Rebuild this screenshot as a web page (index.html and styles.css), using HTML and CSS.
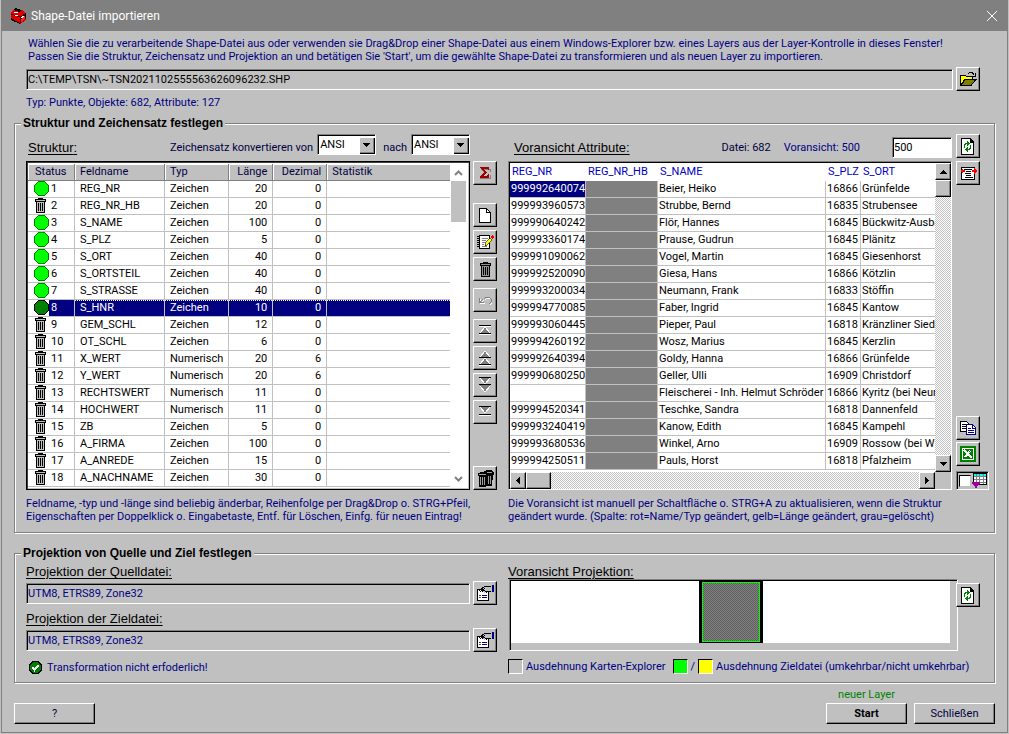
FILE: index.html
```html
<!DOCTYPE html>
<html lang="de">
<head>
<meta charset="utf-8">
<title>Shape-Datei importieren</title>
<link rel="stylesheet" href="styles.css">
</head>
<body>
<svg class="defs" aria-hidden="true">
  <symbol id="bin" viewBox="0 0 13 15"><path d="M4 0h5v1h3v3h-1v11H2V4H1V1h3z" fill="#000"/><path d="M2 2h9v1H2zM3 4h7v10H3z" fill="#909090"/><path d="M4 5h1v8H4zM6 5h1v8H6zM8 5h1v8H8z" fill="#000"/></symbol>
  <symbol id="bin-status" viewBox="0 0 13 15"><path d="M4 0h5v1h3v3h-1v11H2V4H1V1h3z" fill="#000"/><path d="M2 2h9v1H2zM3 4h7v10H3z" fill="#c0c0c0"/><path d="M4 5h1v8H4zM6 5h1v8H6zM8 5h1v8H8z" fill="#000"/></symbol>
  <symbol id="ok" viewBox="0 0 15 15"><path d="M4.500.5h6l4 4v6l-4 4h-6l-4-4v-6z" fill="#0f0" stroke="#008000"/></symbol>
  <symbol id="ok-selected" viewBox="0 0 15 15"><path d="M4.500.5h6l4 4v6l-4 4h-6l-4-4v-6z" fill="#008000" stroke="#000"/></symbol>
  <symbol id="refresh" viewBox="0 0 14 17"><path d="M0 0h10v1h1v1h1v1h1v14H0z" fill="#000"/><path d="M1 1h8v4h3v11H1z" fill="#fff"/><path d="M3 10V6h1V5h2V3h1v1h1v1h1v1H8v1H7v1H6V6H5v1H4v3zM10 7v4H9v1H7v2H6v-1H5v-1H4v-1h1v-1h1V9h1v2h1v-1h1V7z" fill="#008000"/></symbol>
  <symbol id="props" viewBox="0 0 17 16"><path d="M.5 4.500h11v11H.5z" fill="#fff" stroke="#000"/><path d="M2 10h2v1H2z" fill="#c00"/><path d="M2 12h2v1H2z" fill="#080"/><path d="M5 10h5v1H5zM5 12h5v1H5z" fill="#000080"/><path d="M3 5l5-4h6v5H9L8 8z" fill="#c0c0c0"/><path d="M2 6l6-5h6M3 7l5-4M9 6h5M5 7l2-2 3 3" fill="none" stroke="#000"/><path d="M15 0h2v7h-2z" fill="#000080"/></symbol>
</svg>
<main class="window">
  <header class="titlebar">
    <svg class="app-icon" width="16" height="16" viewBox="0 0 16 16"><path d="M1 5L4 1l8 1 4 4v6l-6 4-9-5z" fill="#d00"/><path d="M3 2l3-2 5 2-2 2zM10 9l5-3v5l-5 4zM1 10l9 5v1L1 12zM15 5h1v6h-1z" fill="#000"/><path d="M10 9v6M1 6l9 3 5-3" fill="none" stroke="#600"/><path d="M4 4l4 1M5 7l3 1M11 10l3-2" stroke="#fff"/><path d="M11 11l4-3v3l-4 3z" fill="#f22"/></svg>
    <h1>Shape-Datei importieren</h1>
    <button class="close" type="button" aria-label="Fenster schließen"><svg width="10" height="10" viewBox="0 0 10 10"><path d="M0 0l10 10M10 0L0 10" stroke="#fff" fill="none"/></svg></button>
  </header>
  <div class="content">
    <p class="intro">Wählen Sie die zu verarbeitende Shape-Datei aus oder verwenden sie Drag&amp;Drop einer Shape-Datei aus einem Windows-Explorer bzw. eines Layers aus der Layer-Kontrolle in dieses Fenster!<br>Passen Sie die Struktur, Zeichensatz und Projektion an und betätigen Sie 'Start', um die gewählte Shape-Datei zu transformieren und als neuen Layer zu importieren.</p>
    <div class="path-row">
      <input class="field path" type="text" aria-label="Shape-Datei" value="C:\TEMP\TSN\~TSN2021102555563626096232.SHP" readonly>
      <button class="tool" type="button" aria-label="Datei öffnen"><svg width="18" height="15" viewBox="0 0 18 15"><path d="M1 4l1-1h4l1 1h6v3H6l-4 6H1z" fill="#ff0" stroke="#000"/><path d="M2 13.500L6 7.500h11l-5 6z" fill="#808000" stroke="#000"/><path d="M9 2l2-2h2l2 3M16 1v3h-3" fill="none" stroke="#000"/></svg></button>
    </div>
    <p class="file-info">Typ: Punkte, Objekte: 682, Attribute: 127</p>

    <fieldset class="group structure">
      <legend>Struktur und Zeichensatz festlegen</legend>
      <div class="columns">
        <div class="bar">
          <h2 class="heading">Struktur:</h2>
          <label class="push" for="from">Zeichensatz konvertieren von</label>
          <span class="combo"><select id="from"><option>ANSI</option></select><svg width="15" height="16" viewBox="0 0 15 16" aria-hidden="true"><path d="M4 6h7v1h-1v1H9v1H8v1H7V9H6V8H5V7H4z"/></svg></span>
          <label class="to" for="to">nach</label>
          <span class="combo"><select id="to"><option>ANSI</option></select><svg width="15" height="16" viewBox="0 0 15 16" aria-hidden="true"><path d="M4 6h7v1h-1v1H9v1H8v1H7V9H6V8H5V7H4z"/></svg></span>
        </div>
        <div></div>
        <div class="bar">
          <h2 class="heading inset">Voransicht Attribute:</h2>
          <span class="push dark">Datei: 682</span>
          <label class="count-label" for="count">Voransicht: 500</label>
          <input class="field count" id="count" type="text" value="500">
        </div>
        <div class="bar-tool"><button class="tool" type="button" aria-label="Voransicht aktualisieren"><svg width="14" height="17"><use href="#refresh"/></svg></button></div>

        <div class="list">
          <table class="fields">
            <colgroup><col class="c-status"><col class="c-name"><col class="c-type"><col class="c-len"><col class="c-dec"><col></colgroup>
            <thead><tr><th>Status</th><th>Feldname</th><th>Typ</th><th>Länge</th><th>Dezimal</th><th>Statistik</th></tr></thead>
            <tbody>
              <tr><td><svg class="on"><use href="#ok"/></svg><span>1</span></td><td>REG_NR</td><td>Zeichen</td><td>20</td><td>0</td><td></td></tr>
              <tr><td><svg class="off"><use href="#bin-status"/></svg><span>2</span></td><td>REG_NR_HB</td><td>Zeichen</td><td>20</td><td>0</td><td></td></tr>
              <tr><td><svg class="on"><use href="#ok"/></svg><span>3</span></td><td>S_NAME</td><td>Zeichen</td><td>100</td><td>0</td><td></td></tr>
              <tr><td><svg class="on"><use href="#ok"/></svg><span>4</span></td><td>S_PLZ</td><td>Zeichen</td><td>5</td><td>0</td><td></td></tr>
              <tr><td><svg class="on"><use href="#ok"/></svg><span>5</span></td><td>S_ORT</td><td>Zeichen</td><td>40</td><td>0</td><td></td></tr>
              <tr><td><svg class="on"><use href="#ok"/></svg><span>6</span></td><td>S_ORTSTEIL</td><td>Zeichen</td><td>40</td><td>0</td><td></td></tr>
              <tr><td><svg class="on"><use href="#ok"/></svg><span>7</span></td><td>S_STRASSE</td><td>Zeichen</td><td>40</td><td>0</td><td></td></tr>
              <tr class="selected"><td><svg class="on"><use href="#ok-selected"/></svg><span>8</span></td><td>S_HNR</td><td>Zeichen</td><td>10</td><td>0</td><td></td></tr>
              <tr><td><svg class="off"><use href="#bin-status"/></svg><span>9</span></td><td>GEM_SCHL</td><td>Zeichen</td><td>12</td><td>0</td><td></td></tr>
              <tr><td><svg class="off"><use href="#bin-status"/></svg><span>10</span></td><td>OT_SCHL</td><td>Zeichen</td><td>6</td><td>0</td><td></td></tr>
              <tr><td><svg class="off"><use href="#bin-status"/></svg><span>11</span></td><td>X_WERT</td><td>Numerisch</td><td>20</td><td>6</td><td></td></tr>
              <tr><td><svg class="off"><use href="#bin-status"/></svg><span>12</span></td><td>Y_WERT</td><td>Numerisch</td><td>20</td><td>6</td><td></td></tr>
              <tr><td><svg class="off"><use href="#bin-status"/></svg><span>13</span></td><td>RECHTSWERT</td><td>Numerisch</td><td>11</td><td>0</td><td></td></tr>
              <tr><td><svg class="off"><use href="#bin-status"/></svg><span>14</span></td><td>HOCHWERT</td><td>Numerisch</td><td>11</td><td>0</td><td></td></tr>
              <tr><td><svg class="off"><use href="#bin-status"/></svg><span>15</span></td><td>ZB</td><td>Zeichen</td><td>5</td><td>0</td><td></td></tr>
              <tr><td><svg class="off"><use href="#bin-status"/></svg><span>16</span></td><td>A_FIRMA</td><td>Zeichen</td><td>100</td><td>0</td><td></td></tr>
              <tr><td><svg class="off"><use href="#bin-status"/></svg><span>17</span></td><td>A_ANREDE</td><td>Zeichen</td><td>15</td><td>0</td><td></td></tr>
              <tr><td><svg class="off"><use href="#bin-status"/></svg><span>18</span></td><td>A_NACHNAME</td><td>Zeichen</td><td>30</td><td>0</td><td></td></tr>
            </tbody>
          </table>
          <div class="flat-scroll">
            <svg width="9" height="6" viewBox="0 0 9 6"><path d="M1 5l3.500-3.500L8 5" fill="none" stroke="#808080" stroke-width="2"/></svg>
            <span class="flat-thumb"></span>
            <svg width="9" height="6" viewBox="0 0 9 6"><path d="M1 1l3.500 3.500L8 1" fill="none" stroke="#808080" stroke-width="2"/></svg>
          </div>
        </div>

        <div class="tools">
          <button class="tool" type="button" aria-label="Statistik"><svg width="12" height="12" viewBox="0 0 12 12"><path d="M2 2h9v3M2 2l4 4-4 5h9V8" fill="none" stroke="#808080" stroke-width="1"/><path d="M1 0h9v3H9L8 2H4l4 3-4 4h4l1-2h1v4H1V9l4-4-4-4z" fill="#a00000"/></svg></button>
          <button class="tool gap-l" type="button" aria-label="Neues Feld"><svg width="12" height="15" viewBox="0 0 12 15"><path d="M0 0h8v1h1v1h1v1h1v1h1v11H0z" fill="#000"/><path d="M1 1h6v4h4v9H1z" fill="#fff"/><path d="M8 2v2h2V3H9V2z" fill="#fff"/></svg></button>
          <button class="tool gap-s" type="button" aria-label="Feld bearbeiten"><svg width="17" height="16" viewBox="0 0 17 16"><path d="M2.500 1.500h10v13h-10z" fill="#fff" stroke="#000"/><path d="M0 2.500h3M0 4.500h3M0 6.500h3M0 8.500h3M0 10.500h3M0 12.500h3" stroke="#000" stroke-dasharray="2 1"/><path d="M5 4.500h6M5 6.500h4M5 8.500h3M5 10.500h2M5 12.500h5" stroke="#808080"/><path d="M8 12l1-4 4-4 2 2-4 4z" fill="#ff0" stroke="#000" stroke-width=".6"/><path d="M13 3l2-2 2 2-2 2z" fill="#e00"/></svg></button>
          <button class="tool gap-s" type="button" aria-label="Feld löschen"><svg width="13" height="15"><use href="#bin"/></svg></button>
          <button class="tool gap-m" type="button" aria-label="Rückgängig" disabled><svg width="14" height="9" viewBox="0 0 14 9"><path d="M1.500 2v4.500H6M2 6l3-3M6 3l2-2h3l2 2v3l-2 2" fill="none" stroke="#fff" transform="translate(1 1)"/><path d="M1.500 2v4.500H6M2 6l3-3M6 3l2-2h3l2 2v3l-2 2" fill="none" stroke="#808080"/></svg></button>
          <button class="tool gap-m" type="button" aria-label="An den Anfang"><svg width="12" height="12" viewBox="0 0 12 12"><path d="M6 2l5 6H1z" fill="#808080"/><path d="M6 2L1 8M6 2l5 6" stroke="#fff"/><path d="M0 .5h12M0 8.500h12" stroke="#000"/><path d="M0 1.500h12M0 9.500h12" stroke="#fff"/></svg></button>
          <button class="tool gap-s" type="button" aria-label="Nach oben"><svg width="12" height="16" viewBox="0 0 12 16"><path d="M6 1l5 6H1zM6 8l5 6H1z" fill="#808080"/><path d="M6 1L1 7M6 1l5 6M6 8l-5 6M6 8l5 6" stroke="#fff"/><path d="M0 7.500h12M0 14.500h12" stroke="#000"/><path d="M0 15.500h12" stroke="#fff"/></svg></button>
          <button class="tool gap-s" type="button" aria-label="Nach unten"><svg width="12" height="16" viewBox="0 0 12 16"><path d="M1 1h10L6 7zM1 8h10l-5 7z" fill="#808080"/><path d="M11 1L6 7 1 1M11 9l-5 6-5-6" stroke="#fff" fill="none"/><path d="M0 .5h12M0 7.500h12" stroke="#000"/></svg></button>
          <button class="tool gap-s" type="button" aria-label="Ans Ende"><svg width="12" height="12" viewBox="0 0 12 12"><path d="M1 1h10L6 7z" fill="#808080"/><path d="M11 1L6 7 1 1" stroke="#fff" fill="none"/><path d="M0 .5h12M0 8.500h12" stroke="#000"/><path d="M0 9.500h12" stroke="#fff"/></svg></button>
          <button class="tool last" type="button" aria-label="Alle löschen"><svg width="17" height="17" viewBox="0 0 17 17"><path d="M7 1l3-1h4l3 2v3h-1l-1 11H9zM1 3l3-1h4l2 2v2h-1v11H2V6H1z" fill="#000"/><path d="M2 4.500h7M10 2.500h5" stroke="#a0a0a0"/><path d="M3.500 7v8M5.500 7v8M7.500 7v8M11.500 6v8M13.500 6v8" stroke="#a0a0a0"/></svg></button>
        </div>

        <div class="preview sunken">
          <div class="preview-body">
            <table class="attributes">
              <colgroup><col class="c-reg"><col class="c-hb"><col class="c-person"><col class="c-zip"><col></colgroup>
              <thead><tr><th>REG_NR</th><th>REG_NR_HB</th><th>S_NAME</th><th>S_PLZ</th><th>S_ORT</th></tr></thead>
              <tbody>
                <tr><td class="current">999992640074</td><td></td><td>Beier, Heiko</td><td>16866</td><td>Grünfelde</td></tr>
                <tr><td>999993960573</td><td></td><td>Strubbe, Bernd</td><td>16835</td><td>Strubensee</td></tr>
                <tr><td>999990640242</td><td></td><td>Flör, Hannes</td><td>16845</td><td>Bückwitz-Ausba</td></tr>
                <tr><td>999993360174</td><td></td><td>Prause, Gudrun</td><td>16845</td><td>Plänitz</td></tr>
                <tr><td>999991090062</td><td></td><td>Vogel, Martin</td><td>16845</td><td>Giesenhorst</td></tr>
                <tr><td>999992520090</td><td></td><td>Giesa, Hans</td><td>16866</td><td>Kötzlin</td></tr>
                <tr><td>999993200034</td><td></td><td>Neumann, Frank</td><td>16833</td><td>Stöffin</td></tr>
                <tr><td>999994770085</td><td></td><td>Faber, Ingrid</td><td>16845</td><td>Kantow</td></tr>
                <tr><td>999993060445</td><td></td><td>Pieper, Paul</td><td>16818</td><td>Kränzliner Siedl</td></tr>
                <tr><td>999994260192</td><td></td><td>Wosz, Marius</td><td>16845</td><td>Kerzlin</td></tr>
                <tr><td>999992640394</td><td></td><td>Goldy, Hanna</td><td>16866</td><td>Grünfelde</td></tr>
                <tr><td>999990680250</td><td></td><td>Geller, Ulli</td><td>16909</td><td>Christdorf</td></tr>
                <tr><td></td><td></td><td>Fleischerei - Inh. Helmut Schröder</td><td>16866</td><td>Kyritz (bei Neur</td></tr>
                <tr><td>999994520341</td><td></td><td>Teschke, Sandra</td><td>16818</td><td>Dannenfeld</td></tr>
                <tr><td>999993240419</td><td></td><td>Kanow, Edith</td><td>16845</td><td>Kampehl</td></tr>
                <tr><td>999993680536</td><td></td><td>Winkel, Arno</td><td>16909</td><td>Rossow (bei W</td></tr>
                <tr><td>999994250511</td><td></td><td>Pauls, Horst</td><td>16818</td><td>Pfalzheim</td></tr>
              </tbody>
            </table>
          </div>
          <div class="scroll vertical">
            <button class="arrow" type="button" aria-label="Nach oben blättern"><svg width="7" height="4" viewBox="0 0 7 4"><path d="M3 0h1v1h1v1h1v1h1v1H0V3h1V2h1V1h1z"/></svg></button>
            <span class="thumb"></span>
            <button class="arrow end" type="button" aria-label="Nach unten blättern"><svg width="7" height="4" viewBox="0 0 7 4"><path d="M0 0h7v1H6v1H5v1H4v1H3V3H2V2H1V1H0z"/></svg></button>
          </div>
          <div class="scroll horizontal">
            <button class="arrow" type="button" aria-label="Nach links blättern"><svg width="4" height="7" viewBox="0 0 4 7"><path d="M4 0v7H3V6H2V5H1V4H0V3h1V2h1V1h1V0z"/></svg></button>
            <span class="thumb"></span>
            <button class="arrow end" type="button" aria-label="Nach rechts blättern"><svg width="4" height="7" viewBox="0 0 4 7"><path d="M0 0v7h1V6h1V5h1V4h1V3H3V2H2V1H1V0z"/></svg></button>
          </div>
        </div>

        <div class="tools">
          <button class="tool" type="button" aria-label="Spaltenbreite anpassen"><svg width="17" height="15" viewBox="0 0 17 15"><path d="M1.500 1.500h13v12h-13z" fill="#fff" stroke="#000"/><path d="M4 3.500h8M6 5.500h5M5 7.500h6M6 9.500h5M5 11.500h8" stroke="#000"/><path d="M0 5l3-3v2h2v2H3v2zM17 5l-3-3v2h-2v2h2v2z" fill="#f00"/></svg></button>
          <button class="tool last" type="button" aria-label="Kopieren"><svg width="16" height="14" viewBox="0 0 16 14"><path d="M.5.5h6l2 2v8h-8z" fill="#fff" stroke="#000"/><path d="M2 3.500h4M2 5.500h5M2 7.500h5" stroke="#000"/><path d="M6.500 3.500h6l3 3v7h-9z" fill="#fff" stroke="#000080"/><path d="M12 3v4h3M8 7.500h3M8 9.500h6M8 11.500h6" stroke="#000080" fill="none"/></svg></button>
          <button class="tool gap-m2" type="button" aria-label="Excel-Export"><svg width="16" height="16" viewBox="0 0 16 16"><path d="M0 0h16v16H0z" fill="#008000"/><path d="M2.500 2.500h11v11h-11z" fill="none" stroke="#fff"/><path d="M4 4l8 8M11 4L5 11" stroke="#fff" stroke-width="2"/><path d="M9 6l4-3" stroke="#008000"/></svg></button>
          <label class="toggle"><input type="checkbox" aria-label="Tabelle anzeigen"><svg width="16" height="15" viewBox="0 0 16 15"><path d="M1.500.5h13v11h-13z" fill="#fff" stroke="#000"/><path d="M2 1h12v2H2z" fill="#0ff"/><path d="M2 3.500h12M2 6.500h12M2 9.500h12M4.500 1v10M7.500 1v10M11.500 1v10" stroke="#808080"/><path d="M0 9h8v2l-3 2v2H3v-2l-3-2z" fill="#a000a0"/></svg></label>
        </div>

        <p class="note">Feldname, -typ und -länge sind beliebig änderbar, Reihenfolge per Drag&amp;Drop o. STRG+Pfeil,<br>Eigenschaften per Doppelklick o. Eingabetaste, Entf. für Löschen, Einfg. für neuen Eintrag!</p>
        <div></div>
        <p class="note">Die Voransicht ist manuell per Schaltfläche o. STRG+A zu aktualisieren, wenn die Struktur<br>geändert wurde. (Spalte: rot=Name/Typ geändert, gelb=Länge geändert, grau=gelöscht)</p>
        <div></div>
      </div>
    </fieldset>

    <fieldset class="group projection">
      <legend>Projektion von Quelle und Ziel festlegen</legend>
      <div class="columns">
        <div class="wide">
          <label class="heading" for="source">Projektion der Quelldatei:</label>
          <div class="projection-row"><input class="field" id="source" type="text" value="UTM8, ETRS89, Zone32" readonly><button class="tool" type="button" aria-label="Quellprojektion wählen"><svg width="17" height="16"><use href="#props"/></svg></button></div>
          <label class="heading second" for="target">Projektion der Zieldatei:</label>
          <div class="projection-row"><input class="field" id="target" type="text" value="UTM8, ETRS89, Zone32" readonly><button class="tool" type="button" aria-label="Zielprojektion wählen"><svg width="17" height="16"><use href="#props"/></svg></button></div>
          <p class="state"><svg width="13" height="13" viewBox="0 0 13 13"><path d="M4 .5h5l3.500 3.500v5L9 12.500H4L.5 9V4z" fill="#008000" stroke="#000"/><path d="M3.500 6.500L5.500 9l4-5" fill="none" stroke="#fff" stroke-width="2"/></svg>Transformation nicht erfoderlich!</p>
        </div>
        <div>
          <h2 class="heading">Voransicht Projektion:</h2>
          <div class="map sunken"><div class="map-area"><span class="extent"></span></div></div>
          <p class="key"><i class="swatch"></i><span>Ausdehnung Karten-Explorer</span><i class="swatch green"></i><span>/</span><i class="swatch yellow"></i><span>Ausdehnung Zieldatei (umkehrbar/nicht umkehrbar)</span></p>
        </div>
        <div class="map-tools"><button class="tool" type="button" aria-label="Projektion aktualisieren"><svg width="14" height="17"><use href="#refresh"/></svg></button></div>
      </div>
    </fieldset>

    <footer class="footer">
      <button class="command" type="button">?</button>
      <div class="start"><span>neuer Layer</span><button class="command strong" type="button">Start</button></div>
      <button class="command" type="button">Schließen</button>
    </footer>
  </div>
</main>
</body>
</html>
```
FILE: styles.css
```css
* { box-sizing: border-box; }
body {
  margin: 0;
  background: #c0c0c0;
  color: #000080;
  font: 11px/13px Roboto, "Liberation Sans", Arial, sans-serif;
}
p, h1, h2 { margin: 0; font-weight: normal; }
svg { display: block; flex: none; shape-rendering: crispEdges; }
button, input, select { font: inherit; color: inherit; margin: 0; border-radius: 0; }
.defs { position: absolute; width: 0; height: 0; }

.window {
  min-height: 733px;
  margin-left: 1px;
  margin-right: 1px;
  border: 1px solid #808080;
  border-top: 0;
}
.titlebar {
  display: flex;
  align-items: center;
  height: 31px;
  padding: 0 10px 0 8px;
  background: #808080;
  color: #fff;
}
.titlebar h1 { margin-left: 5px; font: 12px/16px Roboto, sans-serif; }
.close { margin-left: auto; padding: 0; border: 0; background: none; }
.close svg { shape-rendering: auto; }

.content { padding: 6px 12px 8px; }
.intro { padding-left: 14px; white-space: nowrap; }
.path-row { display: flex; align-items: center; gap: 3px; margin: 4px 15px 0 12px; }
.field {
  display: block;
  width: 100%;
  min-width: 0;
  height: 21px;
  padding: 0 1px;
  outline: 0;
  background: #c0c0c0;
  border: 1px solid;
  border-color: #808080 #fff #fff #808080;
  box-shadow: inset 1px 1px #000;
}
.path { color: #000; }
.file-info { margin: 5px 0 0 12px; }

.tool, .command, .arrow, .thumb {
  display: flex;
  flex: none;
  align-items: center;
  justify-content: center;
  padding: 0;
  background: #c0c0c0;
  border: 1px solid;
  border-color: #fff #000 #000 #fff;
  box-shadow: inset -1px -1px #808080;
}
.tool { width: 24px; height: 24px; }
.sunken {
  border: 1px solid;
  border-color: #808080 #fff #fff #808080;
  box-shadow: inset 1px 1px #000;
}

.group {
  min-width: 0;
  margin: 0;
  padding: 4px 4px 9px 11px;
  border: 1px solid #808080;
  box-shadow: 1px 1px #fff, inset 1px 1px #fff;
}
.group legend {
  margin-left: -5px;
  padding: 0 2px;
  background: #c0c0c0;
  color: #000;
  font: bold 12px/13px "Liberation Sans", Arial, sans-serif;
}
.structure { margin-top: 8px; }
.projection { margin-top: 14px; padding-bottom: 7px; }
.columns {
  display: grid;
  grid-template-columns: minmax(0, 1fr) 38px minmax(0, 1fr) 38px;
}
.heading {
  color: #000;
  font: 13px/15px "Liberation Sans", Arial, sans-serif;
  text-decoration: underline;
  text-underline-offset: 2px;
}
.bar { display: flex; align-items: center; gap: 4px; height: 27px; padding: 0 0 1px 2px; }
.bar .inset { padding-left: 4px; }
.push { margin-left: auto; }
.bar label, .push { color: #000040; white-space: nowrap; }
.bar .to { padding-left: 3px; }
.bar .count-label { margin: 0 28px 0 9px; color: #000080; }
.count { flex: none; width: 60px; background: #fff; color: #000; }
.combo { display: grid; flex: none; align-self: flex-start; width: 59px; height: 21px; color: #000; }
.combo select {
  grid-area: 1 / 1;
  appearance: none;
  width: 100%;
  padding: 0 2px;
  background: #fff;
  outline: 0;
  border: 1px solid;
  border-color: #808080 #fff #fff #808080;
  box-shadow: inset 1px 1px #000;
}
.combo svg {
  grid-area: 1 / 1;
  place-self: center end;
  margin-right: 2px;
  pointer-events: none;
  background: #c0c0c0;
  box-shadow: inset 1px 1px #fff, inset -1px -1px #808080, 1px 1px #000;
}

table { width: 100%; border-spacing: 0; table-layout: fixed; color: #000; }
th, td {
  height: 17px;
  padding: 0 5px;
  overflow: hidden;
  text-align: left;
  font-weight: normal;
  line-height: 16px;
  white-space: nowrap;
}
td { border-right: 1px solid #c0c0c0; border-bottom: 1px solid #c0c0c0; }
.list {
  display: flex;
  background: #fff;
  border: 1px solid #000;
  box-shadow: inset 1px 1px #404040, inset -1px -1px #c0c0c0;
  padding: 2px 2px 2px 1px;
}
.fields { flex: 1; width: auto; min-width: 0; }
.fields th {
  background: #c0c0c0;
  color: #000040;
  border-right: 1px solid #808080;
  border-bottom: 1px solid #808080;
  box-shadow: inset 1px 1px #fff;
}
.fields th:last-child, .fields td:last-child { border-right: 0; }
.fields td:nth-child(4), .fields td:nth-child(5), .fields th:nth-child(4), .fields th:nth-child(5) { text-align: right; }
.fields th:first-child { padding: 0 7px; }
.fields td:first-child { padding: 0; }
.fields td svg { float: left; width: 15px; height: 15px; margin-left: 6px; }
.fields td svg.off { width: 13px; margin: 0 1px 0 6px; }
.fields td span { display: block; padding-left: 23px; }
.c-status { width: 47px; }
.c-name { width: 90px; }
.c-type { width: 63px; }
.c-len { width: 44px; }
.c-dec { width: 54px; }
.selected td { background: repeating-linear-gradient(90deg, #fff 0 1px, #000080 1px 2px) top / 100% 1px no-repeat #000080; color: #fff; }
.selected td:first-child { background: linear-gradient(90deg, #fff 21px, #000080 21px); }
.flat-scroll {
  display: flex;
  flex-direction: column;
  align-items: center;
  width: 17px;
  padding: 6px 0 5px;
}
.flat-scroll svg { shape-rendering: auto; }
.flat-scroll svg:last-child { margin-top: auto; }
.flat-thumb { width: 15px; height: 41px; margin-top: 5px; background: #c0c0c0; }

.tools { display: flex; flex-direction: column; padding-left: 4px; align-items: flex-start; }
.list + .tools { padding-left: 3px; }
.bar-tool { padding-left: 4px; }
.gap-l { margin-top: 18px; }
.gap-m { margin-top: 7px; }
.gap-m2 { margin-top: 2px; }
.gap-s { margin-top: 3px; }
.tools .last { margin-top: auto; }
.toggle {
  display: flex;
  align-items: center;
  gap: 1px;
  width: 33px;
  height: 19px;
  margin-top: 5px;
  padding-left: 2px;
  border: 1px solid;
  border-color: #808080 #fff #fff #808080;
  box-shadow: inset 1px 1px #000;
}
.toggle input {
  appearance: none;
  width: 12px;
  height: 12px;
  background: #fff;
  border: 1px solid;
  border-color: #000 #c0c0c0 #c0c0c0 #000;
}

.preview {
  display: grid;
  grid-template-columns: minmax(0, 1fr) 16px;
  grid-template-rows: 1fr 17px;
  padding: 1px 0 0 1px;
}
.preview-body { overflow: hidden; background: #fff; }
.attributes th { height: 18px; padding: 0 2px; color: #0000c0; overflow: visible; }
.attributes td { padding: 0 0 0 1px; }
.attributes td:nth-child(2) { background: #808080; }
.attributes td:last-child, .attributes th:last-child { border-right: 0; text-overflow: clip; }
.attributes .current { background: #000080; color: #fff; }
.c-reg { width: 76px; }
.c-hb { width: 72px; }
.c-person { width: 168px; }
.c-zip { width: 35px; }
.scroll { display: flex; background: repeating-conic-gradient(#fff 0 25%, #c0c0c0 0 50%) 0 0 / 2px 2px; }
.vertical { flex-direction: column; }
.arrow { width: 16px; height: 17px; }
.thumb { width: 16px; height: 17px; }
.horizontal .thumb { width: 25px; }
.end { margin-top: auto; }
.horizontal .end { margin: 0 0 0 auto; }
.note { padding-top: 7px; white-space: nowrap; }

.wide { grid-column: span 2; padding-right: 11px; }
.projection label, .projection h2 { display: block; }
.projection .second { margin-top: 6px; }
.projection-row { display: flex; align-items: center; gap: 3px; margin-top: 2px; }
.state { display: flex; align-items: center; gap: 5px; height: 15px; margin: 8px 0 0 3px; }
.map { height: 72px; margin: 0 -6px 0 1px; padding: 1px 7px 7px 1px; }
.map-area { height: 100%; background: #fff; }
.extent {
  display: block;
  width: 64px;
  height: 100%;
  margin: 0 auto;
  border: solid #000;
  border-width: 1px 3px;
  background: repeating-conic-gradient(#808080 0 25%, #606060 0 50%) 0 0 / 2px 2px;
  box-shadow: inset 0 0 0 1px #0f0;
}
.key { display: flex; align-items: center; gap: 3px; margin: 8px -24px 0 0; white-space: nowrap; }
.key span:nth-child(2) { margin-right: 4px; }
.swatch { flex: none; width: 15px; height: 15px; border: 1px solid; border-color: #000 #fff #fff #000; }
.green { background: #0f0; }
.yellow { background: #ff0; }
.map-tools { position: relative; padding: 19px 0 0 4px; }

.footer { display: flex; align-items: flex-end; gap: 7px; margin-top: 5px; }
.command { width: 81px; height: 21px; color: #000040; }
.start { margin-left: auto; text-align: center; color: #008000; }
.start span { display: block; margin-bottom: 2px; }
.strong { font-weight: bold; color: #000; }
```
